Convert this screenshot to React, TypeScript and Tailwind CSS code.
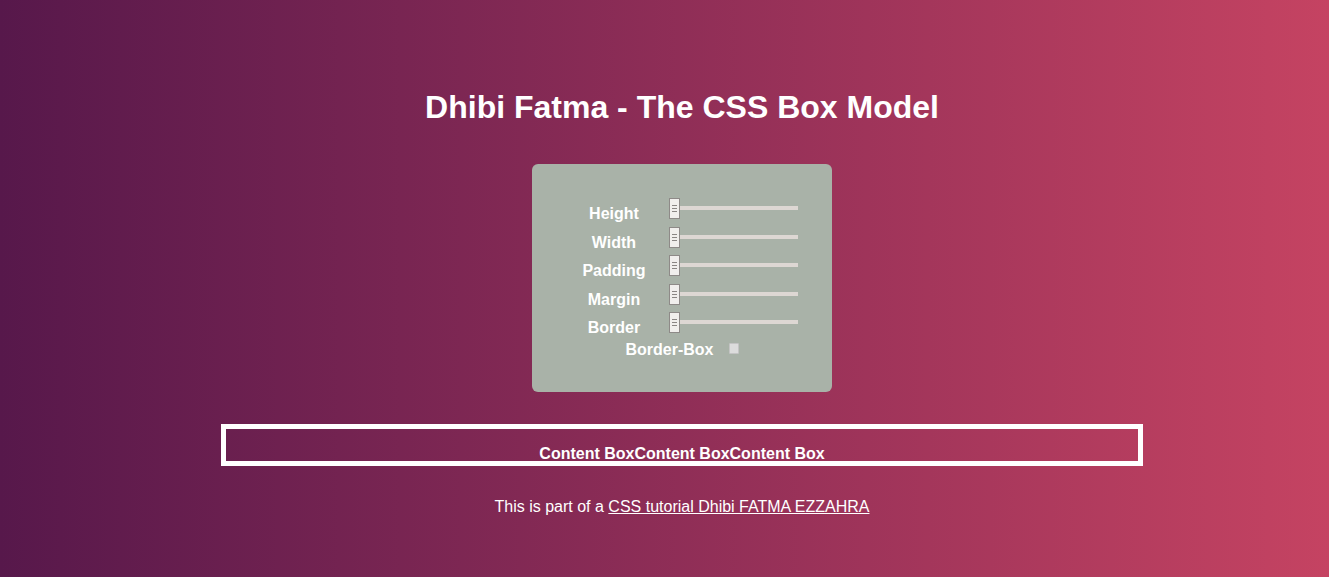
import React from "react";

const rows = ["Height", "Width", "Padding", "Margin", "Border"];

function Slider() {
  return (
    <div className="flex items-start w-[129px] h-[21px]">
      <div className="relative z-10 flex flex-col items-center justify-center gap-[2px] w-[11px] h-[21px] bg-[#f1efed] border border-[#8e8a88] shrink-0">
        <span className="block w-[5px] h-px bg-[#8a8684]" />
        <span className="block w-[5px] h-px bg-[#8a8684]" />
        <span className="block w-[5px] h-px bg-[#8a8684]" />
      </div>
      <div className="mt-[8px] flex-1 h-[4px] bg-[#ddd7d3]" />
    </div>
  );
}

export default function App() {
  return (
    <div
      className="min-h-[577px] w-full bg-[linear-gradient(to_right,#57184b,#c54362)] text-white pl-[35px]"
      style={{ fontFamily: '"Liberation Sans", Arial, sans-serif' }}
    >
      <div className="flex flex-col items-center pt-[89px]">
        <h1 className="text-[32px] leading-[37px] font-bold">Dhibi Fatma - The CSS Box Model</h1>

        {/* Controls */}
        <div className="mt-[38px] w-[300px] h-[228px] bg-[#a9b2a8] rounded-[6px] pt-[34px] pl-[40px]">
          {rows.map((r) => (
            <div key={r} className="flex items-start h-[28.5px]">
              <div className="w-[84px] text-center text-[16px] leading-[18px] font-bold mt-[7px]">{r}</div>
              <div className="ml-[13px]">
                <Slider />
              </div>
            </div>
          ))}
          <div className="flex items-start justify-center -ml-[40px] mt-[0.5px]">
            <span className="text-[16px] leading-[18px] font-bold">Border-Box</span>
            <span className="ml-[15px] mt-[2px] w-[10px] h-[11px] bg-[#dcdcdc] border border-[#c4c4c4] rounded-[1px]" />
          </div>
        </div>

        {/* Content box */}
        <div className="mt-[32px] w-[922px] h-[42px] border-[5px] border-white pt-[16px] text-center text-[16px] leading-[18px] font-bold">
          Content BoxContent BoxContent Box
        </div>

        <p className="mt-[32px] text-[16px] leading-[18px]">
          This is part of a{" "}
          <a href="#" className="underline">
            CSS tutorial Dhibi FATMA EZZAHRA
          </a>
        </p>
      </div>
    </div>
  );
}
